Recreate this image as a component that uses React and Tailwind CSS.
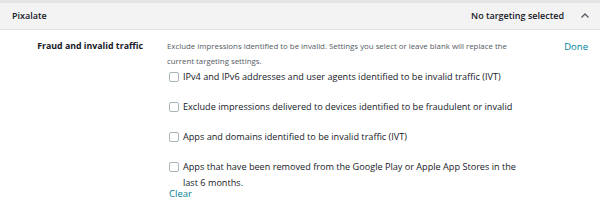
import React from "react";

const items = [
  "IPv4 and IPv6 addresses and user agents identified to be invalid traffic (IVT)",
  "Exclude impressions delivered to devices identified to be fraudulent or invalid",
  "Apps and domains identified to be invalid traffic (IVT)",
  "Apps that have been removed from the Google Play or Apple App Stores in the last 6 months.",
];

export default function App() {
  return (
    <div
      className="w-[600px] h-[210px] bg-white overflow-hidden text-[#16191f]"
      style={{ fontFamily: '"Open Sans", "Noto Sans", sans-serif' }}
    >
      <div className="h-[3px] bg-[#e4e4e4]" />
      <div className="h-[27px] bg-[#f3f3f3] border-b border-[#e2e2e2] flex items-center justify-between pl-[12px] pr-[10px]">
        <span className="text-[9px] font-semibold">Pixalate</span>
        <div className="flex items-center gap-[16px]">
          <span className="text-[9px] font-semibold">No targeting selected</span>
          <svg width="10" height="7" viewBox="0 0 10 7" className="mt-[-1px]">
            <path d="M1.5 5.5 L5 2 L8.5 5.5" fill="none" stroke="#545b64" strokeWidth="1.3" />
          </svg>
        </div>
      </div>
      <div className="flex pt-[9px]">
        <div className="w-[143px] shrink-0 text-right text-[8.8px] font-bold leading-[15px]">
          Fraud and invalid traffic
        </div>
        <div className="w-[360px] shrink-0 ml-[24px]">
          <p className="text-[7.85px] leading-[15px] text-[#545b64]">
            Exclude impressions identified to be invalid. Settings you select or leave blank will replace the current targeting settings.
          </p>
          <div className="flex flex-col gap-[14px] pl-[2px]">
            {items.map((t) => (
              <label key={t} className="flex items-start gap-[4px] text-[9.15px] leading-[16px]">
                <span className="mt-[3px] w-[10px] h-[10px] shrink-0 rounded-[2px] border border-[#aab7b8] bg-white" />
                <span>{t}</span>
              </label>
            ))}
          </div>
          <div className="text-[9.5px] leading-[12px] text-[#00819a] mt-[-3px] ml-[2px]">Clear</div>
        </div>
        <div className="flex-1 flex justify-end pr-[12px]">
          <span className="text-[9.5px] leading-[15px] text-[#00819a]">Done</span>
        </div>
      </div>
    </div>
  );
}
